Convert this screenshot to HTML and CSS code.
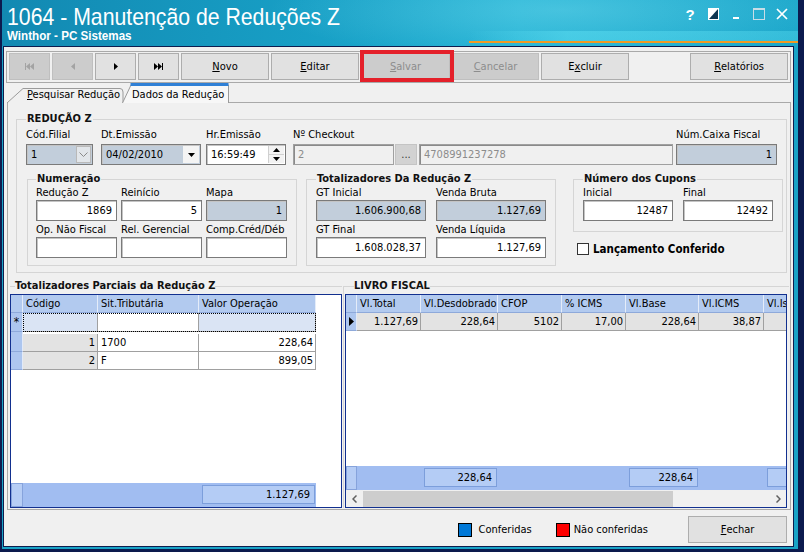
FILE: index.html
```html
<!DOCTYPE html>
<html lang="pt-BR">
<head>
  <meta charset="UTF-8">
  <meta name="viewport" content="width=device-width, initial-scale=1.0">
  <title>1064 - Manutenção de Reduções Z</title>
  <link rel="stylesheet" href="styles.css">
</head>
<body>

<div class="window">
  <div class="titlebar">
    <div class="titles">
      <div class="app-title">1064 - Manutenção de Reduções Z</div>
      <div class="app-sub">Winthor - PC Sistemas</div>
    </div>
    <div class="win-ctrls">
      <span class="ctl help">?</span>
      <span class="ctl"><svg width="11" height="12" viewBox="0 0 11 12"><rect x="0.5" y="0.5" width="10" height="11" fill="#0d3550" stroke="#fff"/><path d="M1 1 H10 L1 11 Z" fill="#fff"/></svg></span>
      <span class="ctl"><svg width="11" height="12" viewBox="0 0 11 12"><rect x="2" y="9" width="6" height="2" fill="#fff"/></svg></span>
      <span class="ctl"><svg width="12" height="12" viewBox="0 0 12 12"><rect x="0.5" y="0.5" width="11" height="11" fill="none" stroke="#c9dde6"/><rect x="0" y="0" width="12" height="2" fill="#c9dde6"/></svg></span>
      <span class="ctl"><svg width="12" height="12" viewBox="0 0 12 12"><path d="M1 1 L11 11 M11 1 L1 11" stroke="#fff" stroke-width="1.7"/></svg></span>
    </div>
  </div>

  <div class="client">
    <div class="toolbar">
      <button class="btn nav off"><svg width="9" height="7" viewBox="0 0 9 7"><rect x="0" y="0" width="1" height="7"/><path d="M5 0 L1 3.5 L5 7 Z M9 0 L5 3.5 L9 7 Z"/></svg></button>
      <button class="btn nav off"><svg width="4" height="7" viewBox="0 0 4 7"><path d="M4 0 L0 3.5 L4 7 Z"/></svg></button>
      <button class="btn nav"><svg width="4" height="7" viewBox="0 0 4 7"><path d="M0 0 L4 3.5 L0 7 Z"/></svg></button>
      <button class="btn nav"><svg width="9" height="7" viewBox="0 0 9 7"><path d="M0 0 L4 3.5 L0 7 Z M4 0 L8 3.5 L4 7 Z"/><rect x="8" y="0" width="1" height="7"/></svg></button>
      <button class="btn"><u>N</u>ovo</button>
      <button class="btn"><u>E</u>ditar</button>
      <button class="btn off mark"><u>S</u>alvar</button>
      <button class="btn off w87"><u>C</u>ancelar</button>
      <button class="btn">E<u>x</u>cluir</button>
      <button class="btn rel"><u>R</u>elatórios</button>
    </div>

    <div class="tabs">
      <svg class="tab-shapes" width="789" height="20" viewBox="0 0 789 20">
        <path d="M3 20 L19 5.5 L116 5.5 Q119 5.5 119 9 L119 20" fill="#f0f0f0" stroke="#9a9a9a"/>
        <path d="M118.5 20 L127 2 L224.5 2 L224.5 20" fill="#f7f7f7" stroke="#9a9a9a"/>
        <path d="M126.5 1.5 L224.5 1.5" stroke="#2f80d6" stroke-width="3"/>
      </svg>
      <span class="tab t1"><u>P</u>esquisar Redução</span>
      <span class="tab t2">Dados da Redução</span>
    </div>

    <div class="tabpage">
      <fieldset class="group g-main">
        <legend>REDUÇÃO Z</legend>
        <div class="top-row">
          <div class="fld w67">
            <label>Cód.Filial</label>
            <div class="box blue combo"><span>1</span><span class="dd light"><svg width="9" height="5" viewBox="0 0 9 5"><path d="M0.5 0.5 L4.5 4.5 L8.5 0.5" fill="none" stroke="#8a8a8a"/></svg></span></div>
          </div>
          <div class="fld w100 ml8">
            <label>Dt.Emissão</label>
            <div class="box blue combo"><span>04/02/2010</span><span class="dd"><svg width="7" height="4" viewBox="0 0 7 4"><path d="M0 0 L7 0 L3.5 4 Z"/></svg></span></div>
          </div>
          <div class="fld w80 ml5">
            <label>Hr.Emissão</label>
            <div class="box combo"><span>16:59:49</span><span class="spin"><span><svg width="7" height="4" viewBox="0 0 7 4"><path d="M0 4 L7 4 L3.5 0 Z"/></svg></span><span><svg width="7" height="4" viewBox="0 0 7 4"><path d="M0 0 L7 0 L3.5 4 Z"/></svg></span></span></div>
          </div>
          <div class="fld w101 ml7">
            <label>Nº Checkout</label>
            <div class="box off">2</div>
          </div>
          <div class="fld w22 ml1">
            <label></label>
            <div class="dots">...</div>
          </div>
          <div class="fld w254 ml2">
            <label></label>
            <div class="box off">4708991237278</div>
          </div>
          <div class="fld w101 ml3">
            <label>Núm.Caixa Fiscal</label>
            <div class="box blue num">1</div>
          </div>
        </div>

        <div class="sub-row">
          <fieldset class="group g-num">
            <legend>Numeração</legend>
            <div class="pairs c3">
              <label>Redução Z</label><label>Reinício</label><label>Mapa</label>
              <div class="box num">1869</div><div class="box num">5</div><div class="box blue num">1</div>
              <label>Op. Não Fiscal</label><label>Rel. Gerencial</label><label>Comp.Créd/Déb</label>
              <div class="box"></div><div class="box"></div><div class="box"></div>
            </div>
          </fieldset>
          <fieldset class="group g-tot">
            <legend>Totalizadores Da Redução Z</legend>
            <div class="pairs c2">
              <label>GT Inicial</label><label>Venda Bruta</label>
              <div class="box blue num">1.606.900,68</div><div class="box blue num">1.127,69</div>
              <label>GT Final</label><label>Venda Líquida</label>
              <div class="box num">1.608.028,37</div><div class="box num">1.127,69</div>
            </div>
          </fieldset>
          <div class="right-col">
            <fieldset class="group g-cup">
              <legend>Número dos Cupons</legend>
              <div class="pairs c2s">
                <label>Inicial</label><label>Final</label>
                <div class="box num">12487</div><div class="box num">12492</div>
              </div>
            </fieldset>
            <div class="check"><span class="cb"></span>Lançamento Conferido</div>
          </div>
        </div>
      </fieldset>

      <div class="lower">
        <fieldset class="group g-left">
          <legend>Totalizadores Parciais da Redução Z</legend>
          <div class="grid">
            <div class="g-row head">
              <div class="c ind"></div>
              <div class="c l-cod">Código</div>
              <div class="c l-sit">Sit.Tributária</div>
              <div class="c l-val">Valor Operação</div>
            </div>
            <div class="g-row newrow">
              <div class="c ind star">*</div>
              <div class="focus">
                <div class="c l-cod tint"></div>
                <div class="c l-sit"></div>
                <div class="c l-val tint"></div>
              </div>
            </div>
            <div class="g-gap"><div class="c ind"></div></div>
            <div class="g-row data">
              <div class="c ind"></div>
              <div class="c l-cod ro num">1</div>
              <div class="c l-sit">1700</div>
              <div class="c l-val num">228,64</div>
            </div>
            <div class="g-row data">
              <div class="c ind"></div>
              <div class="c l-cod ro num">2</div>
              <div class="c l-sit">F</div>
              <div class="c l-val num">899,05</div>
            </div>
            <div class="g-fill"></div>
            <div class="g-row foot">
              <div class="c ind"></div>
              <div class="c l-cod"></div>
              <div class="c l-sit"></div>
              <div class="c l-val"><span class="fbox">1.127,69</span></div>
            </div>
          </div>
        </fieldset>

        <fieldset class="group g-right">
          <legend>LIVRO FISCAL</legend>
          <div class="grid">
            <div class="g-row head">
              <div class="c rind"></div>
              <div class="c r1">Vl.Total</div>
              <div class="c r2">Vl.Desdobrado</div>
              <div class="c r3">CFOP</div>
              <div class="c r4">% ICMS</div>
              <div class="c r5">Vl.Base</div>
              <div class="c r6">Vl.ICMS</div>
              <div class="c r7">Vl.Is</div>
            </div>
            <div class="g-row data gray">
              <div class="c rind"><svg width="5" height="9" viewBox="0 0 5 9"><path d="M0 0 L5 4.5 L0 9 Z"/></svg></div>
              <div class="c r1 num">1.127,69</div>
              <div class="c r2 num">228,64</div>
              <div class="c r3 num">5102</div>
              <div class="c r4 num">17,00</div>
              <div class="c r5 num">228,64</div>
              <div class="c r6 num">38,87</div>
              <div class="c r7 num"></div>
            </div>
            <div class="g-fill"></div>
            <div class="g-row foot">
              <div class="c rind"></div>
              <div class="c r1"></div>
              <div class="c r2"><span class="fbox">228,64</span></div>
              <div class="c r3"></div>
              <div class="c r4"></div>
              <div class="c r5"><span class="fbox">228,64</span></div>
              <div class="c r6"></div>
              <div class="c r7"><span class="fbox"></span></div>
            </div>
            <div class="hscroll">
              <span class="arrow"><svg width="5" height="8" viewBox="0 0 5 8"><path d="M4.5 0.5 L1 4 L4.5 7.5" fill="none" stroke="#606060" stroke-width="1.5"/></svg></span>
              <span class="track"><span class="thumb"></span></span>
              <span class="arrow"><svg width="5" height="8" viewBox="0 0 5 8"><path d="M0.5 0.5 L4 4 L0.5 7.5" fill="none" stroke="#606060" stroke-width="1.5"/></svg></span>
            </div>
          </div>
        </fieldset>
      </div>
    </div>

    <div class="bottom">
      <span class="sw blue"></span><span class="sw-text">Conferidas</span>
      <span class="sw red"></span><span class="sw-text last">Não conferidas</span>
      <button class="btn fechar"><u>F</u>echar</button>
    </div>
  </div>
</div>

</body>
</html>
```

FILE: styles.css
```css
* {
  box-sizing: border-box;
}
body {
  margin: 0;
  font-family: "DejaVu Sans Condensed", "DejaVu Sans", sans-serif;
  font-size: 11px;
  color: #000;
  background: #0c1a4e;
}
.window {
  width: 804px;
  height: 552px;
  background: #19a3c7;
  border-left: 2px solid #0c1a4e;
  border-right: 6px solid #0c1a4e;
  border-bottom: 3px solid #0c1a4e;
  display: flex;
  flex-direction: column;
}

/* title bar */
.titlebar {
  height: 46px;
  flex: none;
  display: flex;
  padding-left: 5px;
  color: #fff;
  background:
    linear-gradient(#f29a22, #f29a22) no-repeat 467px 41px / 329px 2px,
    linear-gradient(90deg, rgba(90, 220, 240, 0) 0, rgba(90, 220, 240, 0.55) 30%, rgba(90, 220, 240, 0.4) 100%) no-repeat 467px 31px / 329px 10px,
    radial-gradient(ellipse 420px 70px at 560px 10px, rgba(140, 230, 245, 0.35), rgba(140, 230, 245, 0) 70%),
    linear-gradient(90deg, #1289b2 0%, #18a0c6 40%, #22b2d4 65%, #1aa6ca 100%);
}
.titles {
  padding-top: 3px;
}
.app-title {
  font-family: "Liberation Sans", Arial, sans-serif;
  font-size: 24px;
  line-height: 28px;
  white-space: nowrap;
  transform: scaleX(0.885);
  transform-origin: left center;
}
.app-sub {
  font-family: "Liberation Sans", Arial, sans-serif;
  font-weight: bold;
  font-size: 12.5px;
  line-height: 14px;
  margin-top: -2px;
  white-space: nowrap;
  transform: scaleX(0.93);
  transform-origin: left center;
}
.win-ctrls {
  margin-left: auto;
  display: flex;
  padding: 7px 5px 0 0;
  height: 22px;
}
.ctl {
  width: 22px;
  height: 14px;
  display: flex;
  align-items: center;
  justify-content: center;
}
.ctl + .ctl {
  margin-left: 1px;
}
.help {
  font-family: "Liberation Sans", Arial, sans-serif;
  font-weight: bold;
  font-size: 15px;
}

/* client area */
.client {
  flex: 1;
  margin: 0 4px 3px 1px;
  border: 1px solid #0d1d4f;
  background: #f0f0f0;
  display: flex;
  flex-direction: column;
}

/* toolbar */
.toolbar {
  margin: 4px 2px 0 2px;
  height: 32px;
  flex: none;
  border: 1px solid #a9a9a9;
  padding: 1px 2px;
  display: flex;
  gap: 2px;
}
.btn {
  font-family: inherit;
  font-size: 11px;
  width: 88px;
  height: 27px;
  padding: 0;
  background: #e1e1e1;
  border: 1px solid #adadad;
  color: #000;
  display: flex;
  align-items: center;
  justify-content: center;
}
.btn u {
  text-decoration: underline;
}
.btn.nav {
  width: 41px;
}
.btn.nav svg {
  fill: #000;
}
.btn.off {
  background: #cccccc;
  border-color: #bfbfbf;
  color: #8d8d8d;
}
.btn.off svg {
  fill: #a3a3a3;
}
.btn.w87 {
  width: 87px;
}
.btn.mark {
  width: 89px;
  position: relative;
}
.btn.mark::after {
  content: "";
  position: absolute;
  left: -2px;
  top: -4px;
  right: -5px;
  bottom: -3px;
  border: 4px solid #e4202a;
}
.btn.rel {
  margin-left: auto;
  width: 98px;
}

/* tabs */
.tabs {
  position: relative;
  z-index: 1;
  height: 20px;
  flex: none;
  margin-bottom: -1px;
  display: flex;
}
.tab-shapes {
  position: absolute;
  left: 0;
  top: 0;
}
.tab {
  position: relative;
  line-height: 14px;
  padding-top: 5px;
  white-space: nowrap;
}
.tab.t1 {
  margin-left: 19px;
  width: 99px;
  padding-left: 4px;
}
.tab.t2 {
  width: 106px;
  padding-left: 10px;
}

.tabpage {
  margin: 0 2px 0 3px;
  height: 408px;
  flex: none;
  border: 1px solid #a9a9a9;
}

/* group boxes */
.group {
  margin: 0;
  padding: 0;
  border: 1px solid #d5d5d5;
  min-width: 0;
}
.group legend {
  padding: 0 1px;
  font-weight: bold;
  font-size: 11px;
  line-height: 14px;
  color: #111;
}
.g-main {
  margin: 9px 0 0 8px;
  width: 771px;
  height: 161px;
  padding: 2px 0 0 9px;
}

.top-row {
  display: flex;
}
.fld {
  display: flex;
  flex-direction: column;
}
.fld label {
  height: 14px;
  line-height: 14px;
  margin-bottom: 2px;
  white-space: nowrap;
}
.w67 { width: 67px; }
.w100 { width: 100px; }
.w80 { width: 80px; }
.w101 { width: 101px; }
.w22 { width: 22px; }
.w254 { width: 254px; }
.ml1 { margin-left: 1px; }
.ml2 { margin-left: 2px; }
.ml3 { margin-left: 3px; }
.ml5 { margin-left: 5px; }
.ml7 { margin-left: 7px; }
.ml8 { margin-left: 8px; }

.box {
  height: 21px;
  border: 1px solid #7a7a7a;
  box-shadow: inset 1px 1px 0 #c4c4c4;
  background: #fff;
  padding: 0 4px;
  display: flex;
  align-items: center;
  white-space: nowrap;
  overflow: hidden;
}
.box.blue {
  background: #c2cedb;
}
.box.num {
  justify-content: flex-end;
}
.box.off {
  background: #f0f0f0;
  color: #8c8c8c;
  border-color: #a0a0a0;
  box-shadow: inset 1px 1px 0 #8a8a8a;
}
.box.combo {
  padding-right: 1px;
  justify-content: space-between;
}
.dd {
  width: 16px;
  height: 17px;
  background: #f4f4f4;
  display: flex;
  align-items: center;
  justify-content: center;
}
.dd.light {
  width: 15px;
  background: #e2e6ea;
  border: 1px solid #b9b9b9;
}
.spin {
  width: 16px;
  height: 17px;
  display: flex;
  flex-direction: column;
  border-left: 1px solid #d0d0d0;
}
.spin span {
  flex: 1;
  display: flex;
  align-items: center;
  justify-content: center;
  background: #f2f2f2;
}
.spin span + span {
  border-top: 1px solid #d0d0d0;
}
.dots {
  height: 21px;
  background: #d2d2d2;
  border: 1px solid #c4c4c4;
  text-align: center;
  line-height: 19px;
  color: #333;
}

.sub-row {
  display: flex;
  align-items: flex-start;
  margin-top: 7px;
}
.pairs {
  display: grid;
  grid-template-rows: 14px 21px 16px 21px;
}
.pairs label {
  line-height: 14px;
  white-space: nowrap;
  align-self: end;
}
.pairs.c3 {
  grid-template-columns: repeat(3, 81px);
  column-gap: 4px;
}
.pairs.c2 {
  grid-template-columns: repeat(2, 110px);
  column-gap: 10px;
}
.pairs.c2s {
  grid-template-columns: repeat(2, 90px);
  grid-template-rows: 14px 21px;
  column-gap: 10px;
}
.g-num {
  margin-left: 1px;
  width: 270px;
  height: 94px;
  padding: 0 0 0 8px;
}
.g-tot {
  margin-left: 9px;
  width: 250px;
  height: 94px;
  padding: 0 0 0 9px;
}
.right-col {
  margin-left: 17px;
}
.g-cup {
  width: 210px;
  height: 60px;
  padding: 0 0 0 9px;
}
.check {
  margin: 11px 0 0 4px;
  display: flex;
  align-items: center;
  font-weight: bold;
  font-size: 11.5px;
  line-height: 12px;
}
.cb {
  width: 12px;
  height: 12px;
  border: 1px solid #333;
  background: #fff;
  margin-right: 4px;
}

/* lower grids */
.lower {
  display: flex;
  margin-top: 6px;
}
.g-left {
  margin-left: 2px;
  width: 332px;
  height: 229px;
  border-width: 1px 0 0 0;
}
.g-left legend {
  margin-left: 5px;
  padding: 0;
}
.g-right {
  margin-left: 1px;
  width: 446px;
  height: 229px;
  padding-left: 1px;
  border-width: 1px 0 0 1px;
}
.g-right legend {
  margin-left: 9px;
  padding: 0;
}
.grid {
  margin-top: 1px;
  height: 214px;
  border: 1px solid #12308f;
  background: #fff;
  display: flex;
  flex-direction: column;
  overflow: hidden;
}
.g-right .grid {
  width: 442px;
}
.g-row {
  display: flex;
  flex: none;
  height: 18px;
}
.c {
  flex: none;
  height: 100%;
  padding: 0 3px;
  line-height: 17px;
  white-space: nowrap;
  overflow: hidden;
  border-right: 1px solid #a0a0a0;
  border-bottom: 1px solid #a0a0a0;
}
.c.num {
  text-align: right;
  padding-right: 2px;
}
.ind { width: 12px; }
.rind { width: 11px; }
.l-cod { width: 75px; }
.l-sit { width: 101px; }
.l-val { width: 117px; }
.r1 { width: 64px; }
.r2 { width: 77px; }
.r3 { width: 64px; }
.r4 { width: 64px; }
.r5 { width: 73px; }
.r6 { width: 65px; }
.r7 { width: 60px; }

.ind, .rind {
  background: #adc6ef;
  border-right: 1px solid #e2eaf8;
  border-bottom: 1px solid #8ea9da;
  padding: 0;
}
.head .c {
  background: #b2caef;
  border-right: 1px solid #e4ecf9;
  border-bottom: 1px solid #8ea9da;
}
.newrow {
  height: 19px;
}
.star {
  text-align: center;
  font-size: 12px;
  line-height: 19px;
}
.focus {
  display: flex;
  outline: 1px dotted #000;
  outline-offset: -1px;
}
.tint {
  background: #dae4f4;
}
.g-gap {
  height: 2px;
  flex: none;
  display: flex;
}
.g-gap .c {
  border-bottom: none;
}
.data .ro {
  background: #e3e3e3;
}
.data.gray .c {
  background: #e3e3e3;
}
.data.gray .rind {
  background: #adc6ef;
  display: flex;
  align-items: center;
  justify-content: center;
}
.g-fill {
  flex: 1;
}
.foot {
  height: 24px;
}
.foot .c {
  background: #a1bdf1;
  border-right: none;
  border-bottom: none;
  padding: 2px 1px 2px 3px;
}
.foot .ind, .foot .rind {
  background: #b6cdf5;
  border: 1px solid #86a3dc;
}
.g-left .foot {
  width: 305px;
}
.fbox {
  display: block;
  height: 19px;
  background: #b4ccf5;
  border: 1px solid #7c9edb;
  text-align: right;
  padding-right: 4px;
  line-height: 17px;
}
.hscroll {
  height: 17px;
  flex: none;
  display: flex;
  background: #f0f0f0;
}
.arrow {
  width: 16px;
  display: flex;
  align-items: center;
  justify-content: center;
}
.track {
  flex: 1;
  padding: 1px 0 0 1px;
}
.thumb {
  display: block;
  width: 310px;
  height: 16px;
  background: #cdcdcd;
}

/* bottom bar */
.bottom {
  flex: 1;
  display: flex;
  align-items: center;
  justify-content: flex-end;
  padding: 6px 6px 3px 0;
}
.sw {
  width: 14px;
  height: 14px;
  border: 1px solid #000;
  margin-right: 7px;
}
.sw.blue {
  background: #0078d7;
}
.sw.red {
  background: #ff0000;
  margin-right: 4px;
}
.sw-text {
  margin-right: 24px;
}
.sw-text.last {
  margin-right: 40px;
}
.btn.fechar {
  width: 99px;
}
```
